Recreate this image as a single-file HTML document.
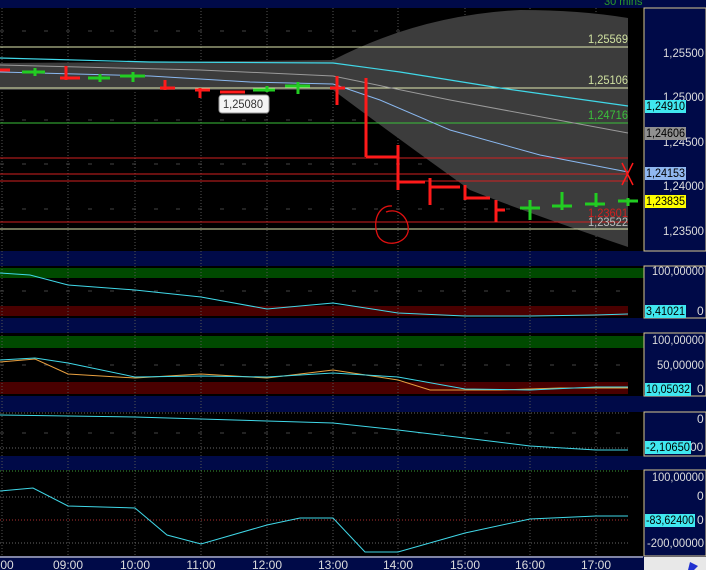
<!DOCTYPE html>
<html><head><style>
html,body{margin:0;padding:0;background:#000;}
svg{display:block}
text{font-family:"Liberation Sans",sans-serif;}
</style></head><body>
<svg width="706" height="570" viewBox="0 0 706 570" xmlns="http://www.w3.org/2000/svg">
<rect width="706" height="570" fill="#000"/>
<rect x="0" y="0" width="706" height="8" fill="#000a48"/>
<rect x="0" y="251" width="706" height="15" fill="#000a48"/>
<rect x="0" y="318" width="706" height="15" fill="#000a48"/>
<rect x="0" y="396" width="706" height="16" fill="#000a48"/>
<rect x="0" y="456" width="706" height="14" fill="#000a48"/>
<rect x="0" y="556" width="706" height="14" fill="#000a48"/>
<text x="604" y="5" font-size="11" fill="#2a9a2a">30 mins</text>
<rect x="0" y="268" width="628" height="10" fill="#004a00"/>
<rect x="0" y="306" width="628" height="10" fill="#4a0000"/>
<rect x="0" y="336" width="628" height="12" fill="#004a00"/>
<rect x="0" y="382" width="628" height="12" fill="#4a0000"/>
<rect x="628" y="268" width="16" height="10" fill="#004a00"/>
<rect x="628" y="336" width="16" height="12" fill="#004a00"/>
<g stroke="#555" stroke-width="1" stroke-dasharray="1,2">
<line x1="2" y1="8" x2="2" y2="556"/><line x1="68" y1="8" x2="68" y2="556"/><line x1="135" y1="8" x2="135" y2="556"/><line x1="201" y1="8" x2="201" y2="556"/><line x1="267" y1="8" x2="267" y2="556"/><line x1="333" y1="8" x2="333" y2="556"/><line x1="398" y1="8" x2="398" y2="556"/><line x1="465" y1="8" x2="465" y2="556"/><line x1="530" y1="8" x2="530" y2="556"/><line x1="596" y1="8" x2="596" y2="556"/>
</g>
<g stroke="#444" stroke-dasharray="4,18">
<line x1="0" y1="31" x2="628" y2="31"/><line x1="0" y1="75" x2="628" y2="75"/><line x1="0" y1="120" x2="628" y2="120"/><line x1="0" y1="164" x2="628" y2="164"/><line x1="0" y1="209" x2="628" y2="209"/>
<line x1="0" y1="291" x2="628" y2="291"/><line x1="0" y1="365" x2="628" y2="365"/><line x1="0" y1="433" x2="628" y2="433"/>
</g>
<g stroke="#666" stroke-dasharray="1,2">
<line x1="0" y1="497" x2="628" y2="497"/><line x1="0" y1="543" x2="628" y2="543"/><line x1="0" y1="448" x2="628" y2="448"/><line x1="0" y1="413" x2="628" y2="413"/>
</g>
<line x1="0" y1="471" x2="628" y2="471" stroke="#3a9a3a" stroke-dasharray="1,2"/>
<line x1="0" y1="520" x2="628" y2="520" stroke="#b03030" stroke-dasharray="1,2"/>
<path d="M0 63 L150 62 L333 60 Q420 15 520 10 Q580 10 628 18 L628 247 Q520 210 470 190 Q400 140 333 90 L0 90 Z" fill="#3c3c3c"/>
<line x1="0" y1="47" x2="628" y2="47" stroke="#dfe8b0"/>
<line x1="0" y1="88" x2="628" y2="88" stroke="#dfe8b0"/>
<line x1="0" y1="123" x2="628" y2="123" stroke="#3ac03a"/>
<line x1="0" y1="158" x2="628" y2="158" stroke="#d02020"/>
<line x1="0" y1="174" x2="628" y2="174" stroke="#d02020"/>
<line x1="0" y1="181" x2="628" y2="181" stroke="#d02020"/>
<line x1="0" y1="222" x2="628" y2="222" stroke="#d02020"/>
<line x1="0" y1="229" x2="628" y2="229" stroke="#dfe8b0"/>
<polyline fill="none" stroke="#40d8e8" stroke-width="1.2" points="0,58 150,62 333,63 400,72 500,88 628,106"/>
<polyline fill="none" stroke="#9a9a9a" points="0,65 200,70 333,76 450,100 628,133"/>
<polyline fill="none" stroke="#8ab8f0" points="0,72 150,76 250,82 333,84 380,100 450,130 540,155 628,172"/>
<g stroke="#ff1a1a" stroke-width="3" fill="none">
<path d="M0 70H10M66 66V80M60 78H80M165 80V90M160 88H175M200 88V98M195 90H210M220 92H245M337 76V105M330 88H345M366 78V157M366 157H398M398 145V190M398 182H425M430 178V205M430 187H460M465 185V200M465 198H490M496 200V222M496 210H505"/>
<path d="M622 163L633 185M633 163L622 185" stroke-width="1.5"/>
</g>
<g stroke="#22cc22" stroke-width="3" fill="none">
<path d="M22 72H45M35 68V76M88 78H110M100 74V82M120 76H145M133 72V82M253 90H275M267 86V92M285 86H310M298 82V94M520 208H540M530 200V220M552 206H572M562 192V210M585 204H605M596 193V207M618 201H638M628 198V206"/>
</g>
<path d="M392 206 C378 205 372 222 378 236 C385 248 405 244 408 232 C410 220 400 207 386 212" fill="none" stroke="#e01010" stroke-width="1.3"/>
<g font-size="12" lengthAdjust="spacingAndGlyphs">
<text x="588" y="43" textLength="40" lengthAdjust="spacingAndGlyphs" fill="#cfe0a0">1,25569</text>
<text x="588" y="84" textLength="40" lengthAdjust="spacingAndGlyphs" fill="#cfe0a0">1,25106</text>
<text x="588" y="119" textLength="40" lengthAdjust="spacingAndGlyphs" fill="#3ac03a">1,24716</text>
<text x="588" y="217" textLength="40" lengthAdjust="spacingAndGlyphs" fill="#d02020">1,23601</text>
<text x="588" y="226" textLength="40" lengthAdjust="spacingAndGlyphs" fill="#bbb">1,23522</text>
</g>
<rect x="219" y="95" width="50" height="18" rx="3" fill="#f4f4f4" stroke="#999"/>
<text x="223" y="108" font-size="12" textLength="40" lengthAdjust="spacingAndGlyphs" fill="#333">1,25080</text>
<polyline fill="none" stroke="#40d8e8" points="0,273 30,275 68,285 135,290 201,297 267,309 333,303 398,313 465,316 530,316 596,315 628,314"/>
<polyline fill="none" stroke="#e8a040" points="0,362 35,359 68,374 135,378 201,374 267,378 333,370 398,380 430,390 500,390 560,388 628,388"/>
<polyline fill="none" stroke="#40d8e8" points="0,360 35,358 68,363 135,377 201,376 267,377 333,373 398,377 465,389 530,390 596,387 628,387"/>
<polyline fill="none" stroke="#40d8e8" points="0,415 68,416 135,417 201,419 267,421 333,423 398,430 465,438 530,446 596,450 628,450"/>
<polyline fill="none" stroke="#40d8e8" points="0,491 33,488 68,506 135,508 167,535 201,544 267,525 300,518 333,518 365,552 398,552 465,533 530,519 596,516 628,516"/>
<rect x="644" y="8" width="62" height="243" fill="#000a48" stroke="#d8c890"/>
<rect x="644" y="266" width="62" height="52" fill="#000a48" stroke="#d8c890"/>
<rect x="644" y="333" width="62" height="63" fill="#000a48" stroke="#d8c890"/>
<rect x="644" y="412" width="62" height="44" fill="#000a48" stroke="#d8c890"/>
<rect x="644" y="470" width="62" height="86" fill="#000a48" stroke="#d8c890"/>
<rect x="644" y="557" width="62" height="13" fill="#e8e8e8"/>
<path d="M690 562 L698 566 L694 570 L688 570 Z" fill="#2030d0"/>
<g font-size="12" fill="#dcdcdc">
<text x="663" y="57" textLength="41" lengthAdjust="spacingAndGlyphs">1,25500</text>
<text x="663" y="101" textLength="41" lengthAdjust="spacingAndGlyphs">1,25000</text>
<text x="663" y="146" textLength="41" lengthAdjust="spacingAndGlyphs">1,24500</text>
<text x="663" y="190" textLength="41" lengthAdjust="spacingAndGlyphs">1,24000</text>
<text x="663" y="235" textLength="41" lengthAdjust="spacingAndGlyphs">1,23500</text>
<text x="652" y="275" textLength="52" lengthAdjust="spacingAndGlyphs">100,00000</text>
<text x="697" y="315">0</text>
<text x="652" y="344" textLength="52" lengthAdjust="spacingAndGlyphs">100,00000</text>
<text x="657" y="369" textLength="47" lengthAdjust="spacingAndGlyphs">50,00000</text>
<text x="697" y="393">0</text>
<text x="697" y="423">0</text><text x="690" y="451">00</text>
<text x="652" y="481" textLength="52" lengthAdjust="spacingAndGlyphs">100,00000</text>
<text x="697" y="500">0</text><text x="697" y="524">0</text>
<text x="647" y="547" textLength="57" lengthAdjust="spacingAndGlyphs">-200,00000</text>
</g>
<g font-size="12" fill="#000">
<rect x="645" y="100" width="41" height="13" fill="#40e8f0"/><text x="646" y="110" textLength="39" lengthAdjust="spacingAndGlyphs">1,24910</text>
<rect x="645" y="127" width="41" height="13" fill="#909090"/><text x="646" y="137" textLength="39" lengthAdjust="spacingAndGlyphs">1,24606</text>
<rect x="645" y="167" width="41" height="13" fill="#90b8f0"/><text x="646" y="177" textLength="39" lengthAdjust="spacingAndGlyphs">1,24153</text>
<rect x="645" y="195" width="41" height="13" fill="#ffff00"/><text x="646" y="205" textLength="39" lengthAdjust="spacingAndGlyphs">1,23835</text>
<rect x="645" y="305" width="41" height="13" fill="#40e8f0"/><text x="646" y="315" textLength="39" lengthAdjust="spacingAndGlyphs">3,41021</text>
<rect x="645" y="383" width="46" height="13" fill="#40e8f0"/><text x="646" y="393" textLength="44" lengthAdjust="spacingAndGlyphs">10,05032</text>
<rect x="645" y="441" width="46" height="13" fill="#40e8f0"/><text x="646" y="451" textLength="44" lengthAdjust="spacingAndGlyphs">-2,10650</text>
<rect x="645" y="514" width="50" height="13" fill="#40e8f0"/><text x="646" y="524" textLength="48" lengthAdjust="spacingAndGlyphs">-83,62400</text>
</g>
<line x1="0" y1="557" x2="643" y2="557" stroke="#fff"/>
<g font-size="12" fill="#dcdcdc" text-anchor="middle">
<text x="2" y="569">8:00</text><text x="68" y="569">09:00</text><text x="135" y="569">10:00</text><text x="201" y="569">11:00</text><text x="267" y="569">12:00</text><text x="333" y="569">13:00</text><text x="398" y="569">14:00</text><text x="465" y="569">15:00</text><text x="530" y="569">16:00</text><text x="596" y="569">17:00</text>
</g>
</svg>
</body></html>
